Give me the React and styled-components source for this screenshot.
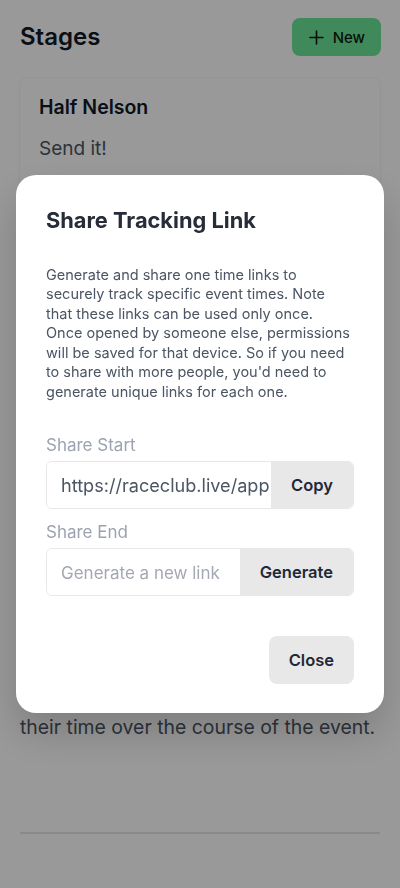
import React from "react";
import styled, { createGlobalStyle } from "styled-components";

const GlobalStyle = createGlobalStyle`
  html, body { margin: 0; padding: 0; background: #ffffff; }
  body { font-family: Inter, "Noto Sans", "Liberation Sans", sans-serif; -webkit-font-smoothing: antialiased; }
  * { box-sizing: border-box; }
`;

const Page = styled.div`
  padding: 18px 20px 40px;
  min-height: 888px;
  background: #ffffff;
  overflow: hidden;
`;

const Header = styled.header`
  display: flex;
  align-items: center;
  justify-content: space-between;
`;

const PageTitle = styled.h1`
  margin: 0;
  font-size: 24px;
  line-height: 32px;
  font-weight: 600;
  color: #111827;
`;

const NewButton = styled.button`
  display: flex;
  align-items: center;
  gap: 9px;
  height: 38px;
  padding: 0 16px 0 17px;
  margin-right: -1px;
  border: none;
  border-radius: 8px;
  background: #6ce496;
  color: #0b1a10;
  font-family: inherit;
  font-size: 15px;
  font-weight: 500;
`;

const Card = styled.section`
  margin-top: 22px;
  height: 590px;
  padding: 15px 19px;
  border-radius: 6px;
  background: #ffffff;
  box-shadow: 0 0 0 1px rgba(0, 0, 0, 0.025), 0 1px 3px rgba(0, 0, 0, 0.05);
`;

const CardTitle = styled.h2`
  margin: 0;
  font-size: 19.5px;
  line-height: 28px;
  font-weight: 600;
  color: #111827;
`;

const CardText = styled.p`
  margin: 14px 0 0;
  font-size: 19px;
  line-height: 28px;
  color: #4b5563;
`;

const Intro = styled.p`
  margin: 45px 0 0;
  font-size: 19.4px;
  line-height: 29px;
  color: #4b5563;
  white-space: nowrap;
`;

const Divider = styled.hr`
  margin: 90px 0 0;
  border: none;
  border-top: 2px solid #e5e5e5;
`;

const Overlay = styled.div`
  position: fixed;
  inset: 0;
  background: rgba(0, 0, 0, 0.4);
  display: flex;
  align-items: center;
  justify-content: center;
`;

const Modal = styled.div`
  width: 368px;
  padding: 31px 30px 29px;
  background: #ffffff;
  border-radius: 20px;
  box-shadow: 0 20px 40px rgba(0, 0, 0, 0.18);
  display: flex;
  flex-direction: column;
`;

const ModalTitle = styled.h3`
  margin: 0;
  font-size: 21.8px;
  line-height: 28px;
  font-weight: 700;
  color: #262c38;
`;

const Description = styled.p`
  margin: 31px 0 0;
  padding-right: 2.5px;
  font-size: 14.5px;
  line-height: 19.4px;
  color: #4b5563;
`;

const Label = styled.label`
  display: block;
  margin-top: ${(p) => p.$top}px;
  margin-bottom: 4px;
  font-size: 17px;
  line-height: 24px;
  color: #9ca3af;
`;

const Group = styled.div`
  display: flex;
  height: 48px;
  border: 1px solid #e5e7eb;
  border-radius: 6px;
  overflow: hidden;
`;

const Field = styled.input`
  flex: 1;
  min-width: 0;
  border: none;
  outline: none;
  padding: 0 1px 0 14px;
  font-family: inherit;
  font-size: 18.1px;
  color: #4b5563;
  background: #ffffff;
  &::placeholder { color: #a4a9b1; font-size: 17px; }
`;

const GroupButton = styled.button`
  flex: none;
  padding: 0 20px;
  border: none;
  background: #e8e8e8;
  font-family: inherit;
  font-size: 16.5px;
  font-weight: 600;
  color: #1f2937;
`;

const Footer = styled.div`
  display: flex;
  justify-content: flex-end;
  margin-top: 40px;
`;

const CloseButton = styled.button`
  height: 48px;
  padding: 0 20px;
  border: none;
  border-radius: 8px;
  background: #e8e8e8;
  font-family: inherit;
  font-size: 16.5px;
  font-weight: 600;
  color: #1f2937;
`;

const PlusIcon = () => (
  <svg width="15" height="15" viewBox="0 0 15 15" fill="none" stroke="currentColor" strokeWidth="1.6" strokeLinecap="round">
    <path d="M7.5 1v13M1 7.5h13" />
  </svg>
);

export default function App() {
  return (
    <>
      <GlobalStyle />
      <Page>
        <Header>
          <PageTitle>Stages</PageTitle>
          <NewButton>
            <PlusIcon />
            New
          </NewButton>
        </Header>
        <Card>
          <CardTitle>Half Nelson</CardTitle>
          <CardText>Send it!</CardText>
        </Card>
        <Intro>their time over the course of the event.</Intro>
        <Divider />
      </Page>
      <Overlay>
        <Modal>
          <ModalTitle>Share Tracking Link</ModalTitle>
          <Description>
            Generate and share one time links to securely track specific event times. Note that
            these links can be used only once. Once opened by someone else, permissions will be
            saved for that device. So if you need to share with more people, you'd need to
            generate unique links for each one.
          </Description>
          <Label $top={32}>Share Start</Label>
          <Group>
            <Field readOnly value="https://raceclub.live/app/track/share" />
            <GroupButton>Copy</GroupButton>
          </Group>
          <Label $top={11}>Share End</Label>
          <Group>
            <Field readOnly placeholder="Generate a new link" />
            <GroupButton>Generate</GroupButton>
          </Group>
          <Footer>
            <CloseButton>Close</CloseButton>
          </Footer>
        </Modal>
      </Overlay>
    </>
  );
}
